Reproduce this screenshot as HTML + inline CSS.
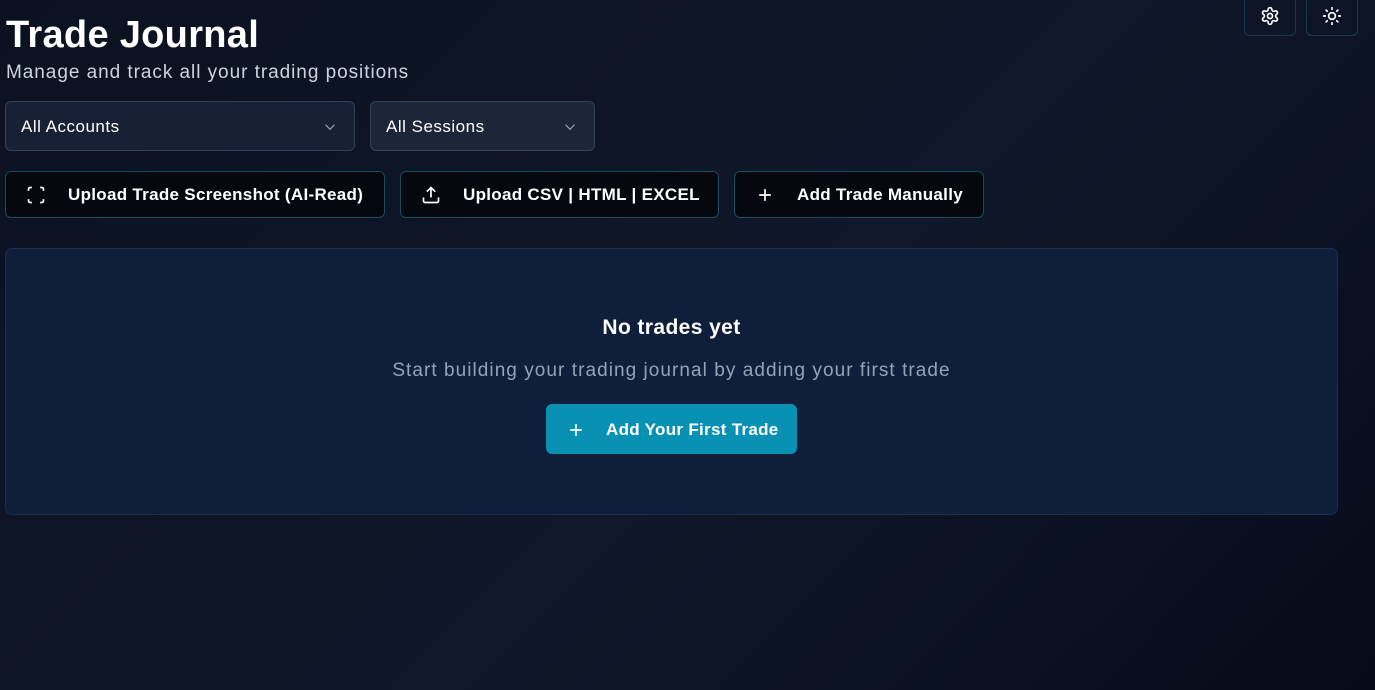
<!DOCTYPE html>
<html><head><style>
*{box-sizing:border-box;margin:0;padding:0}
body{width:1375px;height:690px;overflow:hidden;background:linear-gradient(135deg,#0b1120 0%,#0f172a 55%,#060b19 100%);font-family:"Liberation Sans",sans-serif;color:#fff;position:relative}
.abs{position:absolute}
h1{position:absolute;left:6px;top:14px;font-size:38px;font-weight:bold;letter-spacing:0.3px}
.sub{left:6px;top:62px;font-size:19px;color:#cbd5e1;letter-spacing:0.95px}
.sel{top:101px;height:50px;border:1px solid #334155;border-radius:6px;background:#172136;font-size:17px;padding:2px 15px 0;display:flex;align-items:center;justify-content:space-between;letter-spacing:0.5px}
.btn{top:171px;height:47px;border:1px solid #134e5e;border-radius:6px;background:#05080f;font-size:17px;font-weight:bold;display:flex;align-items:center;padding-left:20px;letter-spacing:0.3px}
.btn svg{margin-right:22px}
.ib{top:-4px;width:52px;height:40px;border:1px solid #163a4f;border-radius:6px;display:flex;align-items:center;justify-content:center}
.card{left:5px;top:248px;width:1333px;height:267px;background:#0f1e3a;border:1px solid #1e2d48;border-radius:7px}
</style></head><body>
<h1>Trade Journal</h1>
<div class="abs sub">Manage and track all your trading positions</div>
<div class="abs ib" style="left:1244px"><svg width="20" height="20" viewBox="0 0 24 24" fill="none" stroke="#fff" stroke-width="2"><path d="M12.2 2h-.4a2 2 0 0 0-2 2v.2a2 2 0 0 1-1 1.7l-.4.3a2 2 0 0 1-2 0l-.2-.1a2 2 0 0 0-2.7.7l-.2.4a2 2 0 0 0 .7 2.7l.2.1a2 2 0 0 1 1 1.7v.5a2 2 0 0 1-1 1.8l-.2.1a2 2 0 0 0-.7 2.7l.2.4a2 2 0 0 0 2.7.7l.2-.1a2 2 0 0 1 2 0l.4.3a2 2 0 0 1 1 1.7v.2a2 2 0 0 0 2 2h.4a2 2 0 0 0 2-2v-.2a2 2 0 0 1 1-1.7l.4-.3a2 2 0 0 1 2 0l.2.1a2 2 0 0 0 2.7-.7l.2-.4a2 2 0 0 0-.7-2.7l-.2-.1a2 2 0 0 1-1-1.8v-.5a2 2 0 0 1 1-1.7l.2-.1a2 2 0 0 0 .7-2.7l-.2-.4a2 2 0 0 0-2.7-.7l-.2.1a2 2 0 0 1-2 0l-.4-.3a2 2 0 0 1-1-1.7V4a2 2 0 0 0-2-2z"/><circle cx="12" cy="12" r="3"/></svg></div>
<div class="abs ib" style="left:1306px"><svg width="20" height="20" viewBox="0 0 24 24" fill="none" stroke="#fff" stroke-width="2" stroke-linecap="round"><circle cx="12" cy="12" r="4"/><path d="M12 2v2M12 20v2M4.9 4.9l1.4 1.4M17.7 17.7l1.4 1.4M2 12h2M20 12h2M6.3 17.7l-1.4 1.4M19.1 4.9l-1.4 1.4"/></svg></div>
<div class="abs sel" style="left:5px;width:350px">All Accounts<svg width="18" height="18" viewBox="0 0 24 24" fill="none" stroke="#94a3b8" stroke-width="1.6"><path d="M6 9l6 6 6-6"/></svg></div>
<div class="abs sel" style="left:370px;width:225px;background:#1c2639">All Sessions<svg width="18" height="18" viewBox="0 0 24 24" fill="none" stroke="#94a3b8" stroke-width="1.6"><path d="M6 9l6 6 6-6"/></svg></div>
<div class="abs btn" style="left:5px;width:380px"><svg width="20" height="20" viewBox="0 0 24 24" fill="none" stroke="#fff" stroke-width="2"><path d="M3 7V5a2 2 0 0 1 2-2h2M17 3h2a2 2 0 0 1 2 2v2M21 17v2a2 2 0 0 1-2 2h-2M7 21H5a2 2 0 0 1-2-2v-2"/></svg>Upload Trade Screenshot (AI-Read)</div>
<div class="abs btn" style="left:400px;width:319px"><svg width="20" height="20" viewBox="0 0 24 24" fill="none" stroke="#fff" stroke-width="2"><path d="M21 15v4a2 2 0 0 1-2 2H5a2 2 0 0 1-2-2v-4M17 8l-5-5-5 5M12 3v12"/></svg>Upload CSV | HTML | EXCEL</div>
<div class="abs btn" style="left:734px;width:250px"><svg width="20" height="20" viewBox="0 0 24 24" fill="none" stroke="#fff" stroke-width="2"><path d="M12 5v14M5 12h14"/></svg>Add Trade Manually</div>
<div class="abs card"></div>
<div class="abs" style="left:0;width:1343px;top:316px;text-align:center;font-size:21px;font-weight:bold;letter-spacing:0.4px">No trades yet</div>
<div class="abs" style="left:0;width:1343px;top:360px;text-align:center;font-size:19px;color:#94a3b8;letter-spacing:1.05px">Start building your trading journal by adding your first trade</div>
<div class="abs" style="left:546px;top:404px;width:251px;height:50px;background:#0891b2;border-radius:6px;display:flex;align-items:center;padding:2px 0 0 20px;font-size:17px;font-weight:bold;letter-spacing:0.3px"><svg width="20" height="20" viewBox="0 0 24 24" fill="none" stroke="#fff" stroke-width="2" style="margin-right:20px"><path d="M12 5v14M5 12h14"/></svg>Add Your First Trade</div>
</body></html>
